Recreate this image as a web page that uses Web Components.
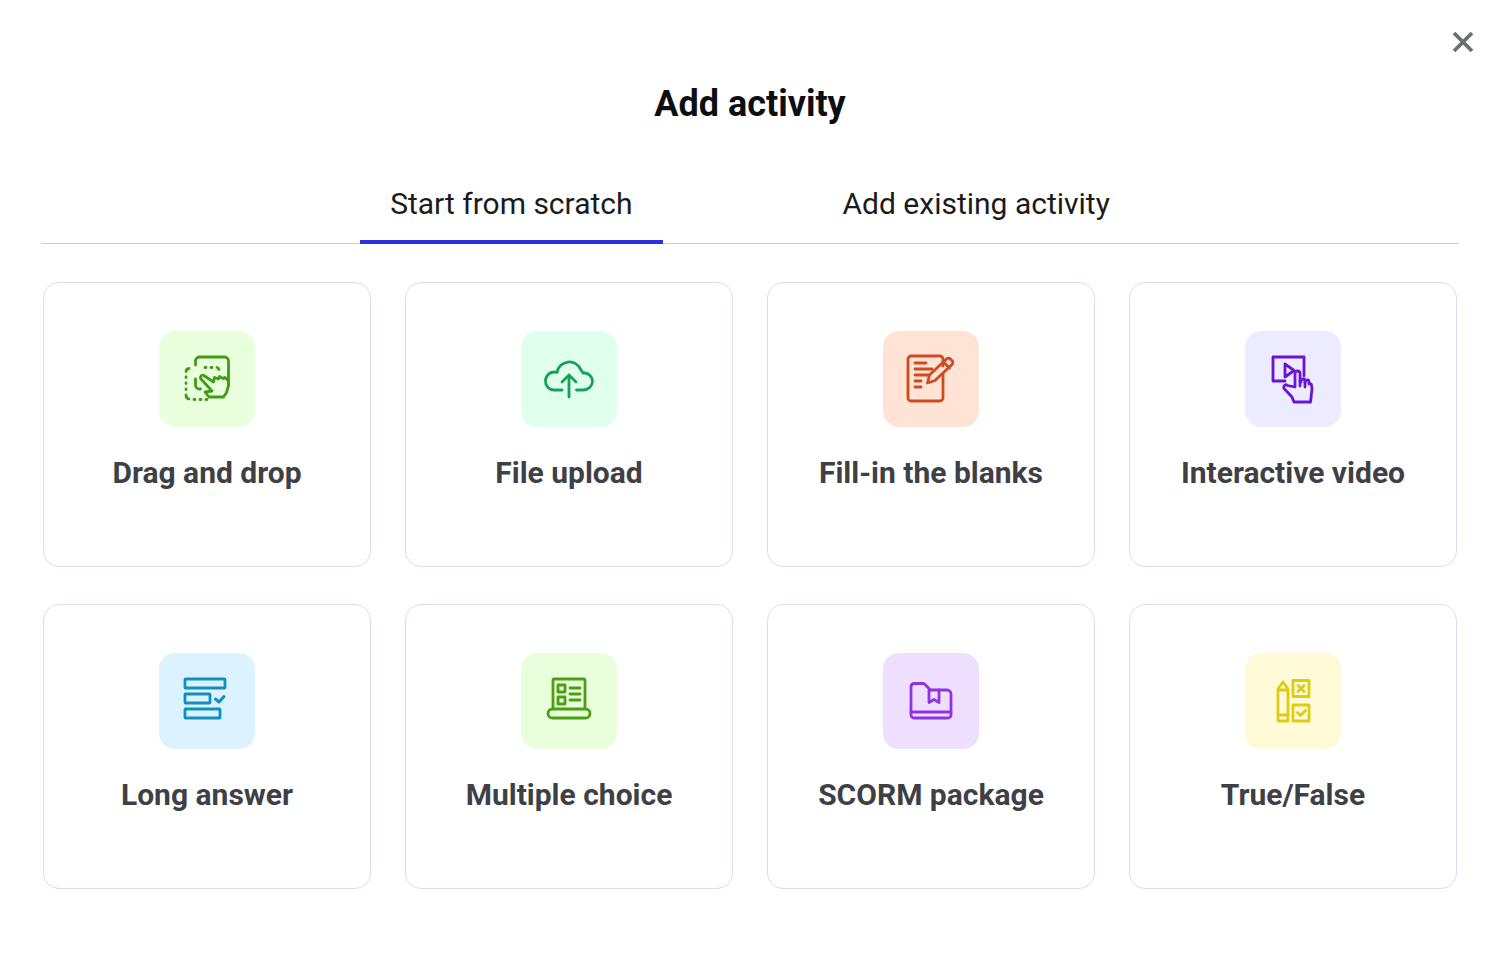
<!DOCTYPE html>
<html lang="en">
<head>
<meta charset="utf-8">
<title>Add activity</title>
<style>
  html, body { margin: 0; background: #fff; font-family: Roboto, "Liberation Sans", sans-serif; }
  svg { display: block; fill: none; stroke: currentColor; stroke-width: 2.800; stroke-linecap: round; stroke-linejoin: round; }
</style>
</head>
<body>
<add-activity-dialog heading="Add activity">
  <activity-tabs slot="tabs">
    <activity-tab active>Start from scratch</activity-tab>
    <activity-tab>Add existing activity</activity-tab>
  </activity-tabs>

  <activity-card label="Drag and drop" tile="#e9ffdd" ink="#3f9c14">
    <svg slot="icon" viewBox="0 0 96 96" width="96" height="96">
      <path d="M36.500 34v-4a4 4 0 0 1 4-4h25a4 4 0 0 1 4 4v24"/>
      <path d="M36.500 48v6a4 4 0 0 0 4 4h1"/>
      <path d="M30 37.500a3.500 3.500 0 0 0-3 3M27 46v.5M27 52v.5M27 58v.5M27 64a4 4 0 0 0 3 4M35 68.500h1M41 68.500h1M47 68.500h1M46 36.500h1M52 36.500h1M58 36.500a3 3 0 0 1 2 2" />
      <path d="M50 66l-4-5 7-1-11-12a2.300 2.300 0 0 1 3.500-3l9 6 1-4.500 4 1.500 1-2.500 3.500 2 2-1 3 3a8 8 0 0 1 .5 5l-2 7-3 4.500z"/>
    </svg>
  </activity-card>

  <activity-card label="File upload" tile="#e0ffec" ink="#14a25a">
    <svg slot="icon" viewBox="0 0 96 96" width="96" height="96">
      <path d="M41 59h-8a8.500 8.500 0 0 1-8.500-8.500 9 9 0 0 1 9-9.500c.8 0 2 .2 2.500.4a12.500 12.500 0 0 1 24-2.400 8 8 0 0 1 2 3h2a8.500 8.500 0 0 1 7.500 8.500 9 9 0 0 1-9 8.500h-7"/>
      <path d="M48 66V44M41 51l7-7 7 7"/>
    </svg>
  </activity-card>

  <activity-card label="Fill-in the blanks" tile="#ffe4d6" ink="#d04a20">
    <svg slot="icon" viewBox="0 0 96 96" width="96" height="96">
      <path d="M60 35v-7a3 3 0 0 0-3-3H28a3 3 0 0 0-3 3v39a3 3 0 0 0 3 3h29a3 3 0 0 0 3-3V43"/>
      <path d="M32 32h11M32 38h17M32 44h14M32 50h6M32 56h6"/>
      <path d="M44.500 52l2-8 17-16a2.800 2.800 0 0 1 4 0l1.500 1.500a2.800 2.800 0 0 1 0 4l-17 16z"/>
      <path d="M60.500 31l6 6"/>
    </svg>
  </activity-card>

  <activity-card label="Interactive video" tile="#ecebff" ink="#6b14d8">
    <svg slot="icon" viewBox="0 0 96 96" width="96" height="96">
      <path d="M40 50H28V26h31v19"/>
      <path d="M40 33l9 6.500-9 6.500z"/>
      <path d="M50 56V42.500a2.500 2.500 0 0 1 5 0V50l1 1v-1a2 2 0 0 1 4 0v2v-1a2 2 0 0 1 4 0v2v-.5a2 2 0 0 1 2.500 1.500l.5 4-1.500 13H49l-2-5-7.500-8a2.300 2.300 0 0 1 3-3.500z"/>
      <path d="M55 50v5M60 52v4"/>
    </svg>
  </activity-card>

  <activity-card label="Long answer" tile="#dcf2ff" ink="#0f90bf">
    <svg slot="icon" viewBox="0 0 96 96" width="96" height="96">
      <rect x="26" y="26" width="40" height="9" rx=".5"/>
      <rect x="26" y="41" width="25" height="9" rx=".5"/>
      <rect x="26" y="56" width="35" height="9" rx=".5"/>
      <path d="M56.500 46l3.500 3 5-5.500" stroke-width="3"/>
    </svg>
  </activity-card>

  <activity-card label="Multiple choice" tile="#e9ffdb" ink="#4b9f10">
    <svg slot="icon" viewBox="0 0 96 96" width="96" height="96">
      <path d="M32 54V27.500a1.500 1.500 0 0 1 1.500-1.500h29a1.500 1.500 0 0 1 1.500 1.500V54"/>
      <rect x="27" y="56" width="42" height="9" rx="4.500"/>
      <rect x="37" y="32" width="7" height="7"/>
      <rect x="37" y="44" width="7" height="7"/>
      <path d="M49 35h10M49 41h10M49 47h10"/>
    </svg>
  </activity-card>

  <activity-card label="SCORM package" tile="#eedfff" ink="#9233e0">
    <svg slot="icon" viewBox="0 0 96 96" width="96" height="96">
      <path d="M31 65a3 3 0 0 1-3-3V34a3.500 3.500 0 0 1 3-3.500h9a2 2 0 0 1 1.500.6l6 5.900H64a4 4 0 0 1 4 4V62a3 3 0 0 1-3 3z"/>
      <path d="M28 59h40M46 37v12.500l5-3 5 3V37"/>
    </svg>
  </activity-card>

  <activity-card label="True/False" tile="#fffad8" ink="#dccc14">
    <svg slot="icon" viewBox="0 0 96 96" width="96" height="96">
      <path d="M33 68V36l5-7 5 7v32zM33 37h10M33 62h10"/>
      <rect x="48" y="27.500" width="16" height="16"/>
      <rect x="48" y="52" width="16" height="16"/>
      <path d="M53 32.500l6 6M59 32.500l-6 6M52.500 59.500l3 3 5-5"/>
    </svg>
  </activity-card>
</add-activity-dialog>

<script>
class AddActivityDialog extends HTMLElement {
  constructor() {
    super();
    const template = document.createElement("template");
    template.innerHTML = `
      <style>
        :host { display: block; width: 1502px; height: 972px; background: #fff; overflow: hidden; }
        .close-row { display: flex; justify-content: flex-end; padding: 30px 27px 0 0; }
        #close {
          width: 24px; height: 24px; padding: 0; border: 0; background: none;
          color: #6b6e73; cursor: pointer;
        }
        #close svg { display: block; fill: none; stroke: currentColor; stroke-width: 3.800; }
        h1 {
          margin: 28px 0 0; padding-right: 2px; text-align: center;
          font-size: 36px; line-height: 44px; font-weight: 700; color: #0e0e12;
        }
        .tabs { margin: 43px 43px 0 41px; width: 1418px; }
        .grid {
          display: grid; grid-template-columns: repeat(4, 328px);
          column-gap: 34px; row-gap: 37px; margin: 38px 0 0 43px;
        }
      </style>
      <div class="close-row">
        <button id="close" aria-label="Close">
          <svg viewBox="0 0 24 24" width="24" height="24"><path d="M3 3l18 18M21 3L3 21"/></svg>
        </button>
      </div>
      <h1 id="heading"></h1>
      <div class="tabs"><slot name="tabs"></slot></div>
      <div class="grid"><slot></slot></div>
    `;
    this.attachShadow({ mode: "open" });
    this.shadowRoot.appendChild(template.content.cloneNode(true));
    this.shadowRoot.querySelector("#heading").textContent = this.getAttribute("heading");
    this.shadowRoot.querySelector("#close").addEventListener("click", () => {
      this.style.display = "none";
    });
  }
}

class ActivityTabs extends HTMLElement {
  constructor() {
    super();
    const template = document.createElement("template");
    template.innerHTML = `
      <style>
        :host { display: block; }
        .bar {
          display: flex; justify-content: center; gap: 150px;
          border-bottom: 1px solid #cfd0d8; height: 74px;
        }
        ::slotted(activity-tab) { margin-bottom: -1px; }
      </style>
      <div class="bar"><slot></slot></div>
    `;
    this.attachShadow({ mode: "open" });
    this.shadowRoot.appendChild(template.content.cloneNode(true));
  }
}

class ActivityTab extends HTMLElement {
  constructor() {
    super();
    const template = document.createElement("template");
    template.innerHTML = `
      <style>
        :host {
          display: block; box-sizing: border-box; height: 75px; padding: 0 30px;
          font-size: 30px; line-height: 70px; color: #1b1b1b; cursor: pointer;
          border-bottom: 4px solid transparent; white-space: nowrap;
        }
        :host([active]) { border-bottom-color: #2c2fe6; }
      </style>
      <slot></slot>
    `;
    this.attachShadow({ mode: "open" });
    this.shadowRoot.appendChild(template.content.cloneNode(true));
  }
}

class ActivityCard extends HTMLElement {
  constructor() {
    super();
    const template = document.createElement("template");
    template.innerHTML = `
      <style>
        :host {
          display: flex; flex-direction: column; align-items: center; box-sizing: border-box;
          height: 285px; padding-top: 48px; border: 1px solid #d9dcf7; border-radius: 16px;
          background: #fff; cursor: pointer;
        }
        .tile {
          width: 96px; height: 96px; border-radius: 16px;
          background: var(--tile); color: var(--ink);
        }
        .label {
          margin-top: 27px; font-size: 30px; line-height: 38px; font-weight: 700; color: #3f3f46;
        }
      </style>
      <div class="tile"><slot name="icon"></slot></div>
      <div class="label"></div>
    `;
    this.attachShadow({ mode: "open" });
    this.shadowRoot.appendChild(template.content.cloneNode(true));
    this.style.setProperty("--tile", this.getAttribute("tile"));
    this.style.setProperty("--ink", this.getAttribute("ink"));
    this.shadowRoot.querySelector(".label").textContent = this.getAttribute("label");
  }
}

customElements.define("add-activity-dialog", AddActivityDialog);
customElements.define("activity-tabs", ActivityTabs);
customElements.define("activity-tab", ActivityTab);
customElements.define("activity-card", ActivityCard);
</script>
</body>
</html>
